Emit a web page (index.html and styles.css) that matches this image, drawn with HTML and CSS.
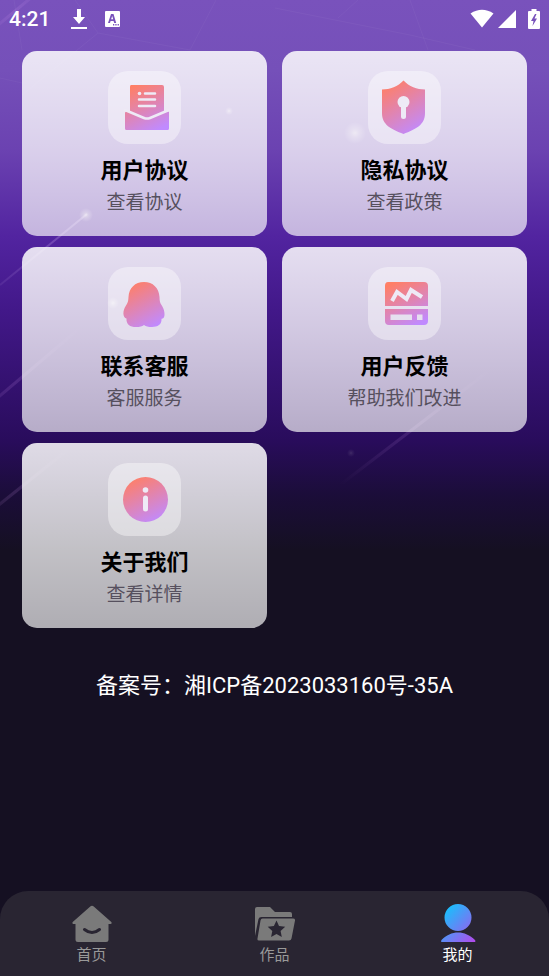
FILE: index.html
```html
<!DOCTYPE html>
<html lang="zh-CN">
<head>
<meta charset="utf-8">
<meta name="viewport" content="width=device-width, initial-scale=1">
<title>我的</title>
<link rel="stylesheet" href="styles.css">
</head>
<body>
<svg class="backdrop" viewBox="0 0 549 560" preserveAspectRatio="none" aria-hidden="true">
  <defs>
    <linearGradient id="warm" x1="0.25" y1="0" x2="0.75" y2="1">
      <stop offset="0" stop-color="#ff7f66"/><stop offset="1" stop-color="#c08aff"/>
    </linearGradient>
    <linearGradient id="cool" x1="0" y1="0" x2="1" y2="1">
      <stop offset="0" stop-color="#00d2ff"/><stop offset="1" stop-color="#b548ec"/>
    </linearGradient>
    <linearGradient id="streak" x1="0" y1="1" x2="1" y2="0">
      <stop offset="0" stop-color="#e6c8ff" stop-opacity=".08"/><stop offset="1" stop-color="#e6c8ff" stop-opacity=".3"/>
    </linearGradient>
    <linearGradient id="faint" x1="0" y1="1" x2="1" y2="0">
      <stop offset="0" stop-color="#e6a8ff" stop-opacity="0"/><stop offset=".5" stop-color="#e6a8ff" stop-opacity=".14"/><stop offset="1" stop-color="#e6a8ff" stop-opacity="0"/>
    </linearGradient>
    <radialGradient id="spark">
      <stop offset="0" stop-color="#ffe" stop-opacity=".5"/><stop offset=".4" stop-color="#ffe" stop-opacity=".25"/><stop offset="1" stop-color="#fff" stop-opacity="0"/>
    </radialGradient>
  </defs>
  <g fill="none" stroke="#fff" stroke-opacity=".04">
    <path d="M0 78 22 83M14 0 22 50M75 0 98 33 190 50 216 0M98 33 22 95M275 8 410 35 475 50M358 0 338 18M410 0 428 50"/>
  </g>
  <g fill="none" stroke-width="2">
    <path stroke="url(#streak)" d="M0 285 87 214"/>
    <g stroke="url(#faint)" stroke-width="3">
      <path d="M-50 438 80 328"/>
      <path d="M-40 536 70 448"/>
      <path d="M-20 40 50-18"/>
      <path d="M340 485 490 370"/>
    </g>
  </g>
  <g fill="url(#spark)">
    <circle cx="86" cy="215" r="7"/><circle cx="355" cy="133" r="11"/><circle cx="229" cy="111" r="4"/><circle cx="113" cy="303" r="6"/><circle cx="351" cy="453" r="4" opacity=".25"/>
  </g>
</svg>

<header class="status">
  <span class="time">4:21</span>
  <svg class="status-icon download" viewBox="0 0 16 20" aria-hidden="true"><path d="M6 0h4v8h4l-6 7-6-7h4zM0 18h16v2H0z"/></svg>
  <svg class="status-icon input" viewBox="0 0 15 16" aria-hidden="true"><path fill-rule="evenodd" d="M1 0h13q1 0 1 1v14q0 1-1 1H1q-1 0-1-1V1q0-1 1-1zM6 3 3 12h2l.6-2h3l.6 2h2L8.500 3zM6.100 8.300 7.200 5l1 3.300zM8 13v1.500h1.300V13zm2.300 0v1.500h1.300V13zm2.300 0v1.500h1.300V13z"/></svg>
  <span class="spacer"></span>
  <svg class="status-icon wifi" viewBox="0 0 24 19" aria-hidden="true"><path d="M0.500 4.500Q12-3 23.500 4.500L12 18.500z"/></svg>
  <svg class="status-icon signal" viewBox="0 0 18 18" aria-hidden="true"><path d="M18 0v18H0z"/></svg>
  <svg class="status-icon battery" viewBox="0 0 12 20" aria-hidden="true"><path fill-rule="evenodd" d="M3.500 0h5v2H11q1 0 1 1v16q0 1-1 1H1q-1 0-1-1V3q0-1 1-1h2.500zM7 5l-4 7h2.500L4.500 17 9 9.500H6.500L8.500 5z"/></svg>
</header>

<main>
  <nav class="cards" aria-label="服务">
    <a class="card" href="#agreement">
      <span class="tile"><svg viewBox="0 0 73 73" aria-hidden="true">
        <path fill="url(#warm)" fill-rule="evenodd" d="M23 14h31q2 0 2 2v24.500h5v17q0 1.500-1.500 1.500h-41Q17 59 17 57.500V42q0-1.500 1.500-1.500H22V16q0-2 1-2z"/>
        <path class="cut" d="m17 39 19 8q3 1.200 6 0l19-8"/>
        <path class="cut" d="M37 22.500h10M31 28.500h16M31 35h16"/>
        <circle class="hole" cx="31.500" cy="22.500" r="1.800"/>
      </svg></span>
      <strong>用户协议</strong><span class="note">查看协议</span>
    </a>
    <a class="card" href="#privacy">
      <span class="tile"><svg viewBox="0 0 73 73" aria-hidden="true">
        <path fill="url(#warm)" d="M35.500 9.500C30 15.500 22 18.500 14 18.500V42c0 12 9 16 21.500 21C48 58 57 54 57 42V18.500c-8 0-16-3-21.500-9z"/>
        <circle class="hole" cx="35.500" cy="31" r="6"/><path class="cut stem" d="M35.500 34v11.500"/>
      </svg></span>
      <strong>隐私协议</strong><span class="note">查看政策</span>
    </a>
    <a class="card" href="#support">
      <span class="tile"><svg viewBox="0 0 73 73" aria-hidden="true">
        <path fill="url(#warm)" d="M36 15c9 0 15 6 15.500 15 .1 4 .5 6 2 8 3 4 4 11 2 13q-1 1-2 .8c.5 6-4 8.200-9.500 8.200-4 0-6-.5-8-2-2 1.500-4 2-8 2-6 0-10-2.500-9.500-8.500-4-.8-4-8-.5-13 2-3 2.300-4.500 2.500-8.500C21 21 27 15 36 15z"/>
      </svg></span>
      <strong>联系客服</strong><span class="note">客服服务</span>
    </a>
    <a class="card" href="#feedback">
      <span class="tile"><svg viewBox="0 0 73 73" aria-hidden="true">
        <path fill="url(#warm)" fill-rule="evenodd" d="M20 15h36q4 0 4 4v20H17V19q0-4 3-4zM17 42h43v12q0 4-4 4H21q-4 0-4-4zM22.500 47.500v5.500h21.500v-5.500zM49 47.500v5.500h5.500v-5.500z"/>
        <path class="cut zigzag" d="m24 34 5-9 9.500 7 4.500-9 11 7"/>
      </svg></span>
      <strong>用户反馈</strong><span class="note">帮助我们改进</span>
    </a>
    <a class="card" href="#about">
      <span class="tile"><svg viewBox="0 0 73 73" aria-hidden="true">
        <circle fill="url(#warm)" cx="37.500" cy="36.500" r="22.500"/>
        <circle class="hole" cx="37.500" cy="27" r="2.800"/><path class="cut stem" d="M37.500 35v11"/>
      </svg></span>
      <strong>关于我们</strong><span class="note">查看详情</span>
    </a>
  </nav>
  <p class="record">备案号：湘ICP备2023033160号-35A</p>
</main>

<nav class="tabs" aria-label="主导航">
  <a class="tab" href="#home">
    <svg viewBox="0 0 40 40" aria-hidden="true"><path fill="#7a7a7a" d="M18 2.700q2-1.700 4 0L39.300 18q1 1.700-.8 2H36.500v15.500q0 2.500-2.500 2.500H6q-2.500 0-2.500-2.500V20H1.500q-1.700-.3-.8-2z"/><path d="M12.500 25.500q7.500 6 15 0" fill="none" stroke="#292532" stroke-width="3" stroke-linecap="round"/></svg>
    <span>首页</span>
  </a>
  <a class="tab" href="#works">
    <svg viewBox="0 0 40 40" aria-hidden="true"><path fill="#7a7a7a" d="M0 32V5q0-2 2-2h13l5 5h15q2 0 2 2v3H6.500q-2.500 0-3 2zM7.500 14.500h30.500q2.300 0 2 2L36.500 34.500q-.4 2-2.500 2H4q-2 0-1.500-2l3-18q.4-2 2-2z"/><path fill="#292532" d="m21.500 16.500 2.500 5.600 6.200.7-4.600 4.200 1.200 6.100-5.300-3-5.400 3 1.200-6.100-4.600-4.200 6.200-.7z"/></svg>
    <span>作品</span>
  </a>
  <a class="tab active" href="#mine" aria-current="page">
    <svg viewBox="0 0 40 40" aria-hidden="true"><path fill="url(#cool)" d="M20 0a13.500 13.500 0 0 1 0 27 13.500 13.500 0 0 1 0-27zM3.500 38q-1-.5 0-2C13 26 27 26 37 36q1 1.500 0 2z"/></svg>
    <span>我的</span>
  </a>
</nav>
</body>
</html>
```

FILE: styles.css
```css
* {
  box-sizing: border-box;
}

body {
  margin: 0;
  min-height: 100vh;
  display: flex;
  flex-direction: column;
  position: relative;
  background: #151022 linear-gradient(#7952bc 0, #7550b9 70px, #6b42b1 150px, #5224a0 236px, #421889 310px, #290c5c 440px, #1b0d39 495px, #151022 550px) no-repeat;
  font-family: Roboto, "Noto Sans CJK SC", sans-serif;
  color: #fff;
}

a {
  color: inherit;
  text-decoration: none;
}

.backdrop {
  position: absolute;
  inset: 0 0 auto;
  width: 100%;
  height: 560px;
  z-index: -1;
}

.status {
  display: flex;
  align-items: center;
  height: 37px;
  padding: 0 9px;
}

.time {
  font-size: 21px;
  font-weight: 500;
  margin-right: 21px;
}

.status-icon {
  fill: #fff;
}

.spacer {
  flex: 1;
}

.download {
  width: 16px;
  height: 20px;
  margin-right: 18px;
}

.input {
  width: 15px;
  height: 16px;
}

.wifi {
  width: 24px;
  height: 19px;
  margin-right: 4px;
}

.signal {
  width: 18px;
  height: 18px;
  margin-right: 12px;
}

.battery {
  width: 12px;
  height: 20px;
}

main {
  flex: 1;
  padding: 14px 22px 0;
}

.cards {
  display: grid;
  grid-template-columns: 1fr 1fr;
  gap: 11px 15px;
}

.card {
  display: flex;
  flex-direction: column;
  align-items: center;
  padding: 20px 0 18px;
  border-radius: 15px;
  background: linear-gradient(rgba(255, 255, 255, .85), rgba(255, 255, 255, .66));
}

.tile {
  width: 73px;
  height: 73px;
  border-radius: 20px;
  background: rgba(255, 255, 255, .4);
}

.tile svg {
  display: block;
}

.cut {
  fill: none;
  stroke: #eeeaf6;
  stroke-width: 2.500;
  stroke-linecap: round;
}

.hole {
  fill: #eeeaf6;
}

.stem {
  stroke-width: 5;
}

.zigzag {
  stroke-width: 4;
  stroke-linecap: butt;
}

.card strong {
  margin-top: 11px;
  font-size: 22px;
  line-height: 32px;
  font-weight: 700;
  color: #000;
}

.note {
  font-size: 19px;
  line-height: 31px;
  color: #56505e;
}

.record {
  margin: 41px 0 0;
  font-size: 22px;
  line-height: 34px;
  text-align: center;
}

.tabs {
  display: grid;
  grid-template-columns: repeat(3, 1fr);
  height: 85px;
  padding-top: 13px;
  border-radius: 28px 28px 0 0;
  background: #292532;
}

.tab {
  display: flex;
  flex-direction: column;
  align-items: center;
  font-size: 15px;
  line-height: 22px;
  color: #999;
}

.tab svg {
  width: 40px;
  height: 40px;
}

.active {
  color: #fff;
}
```
